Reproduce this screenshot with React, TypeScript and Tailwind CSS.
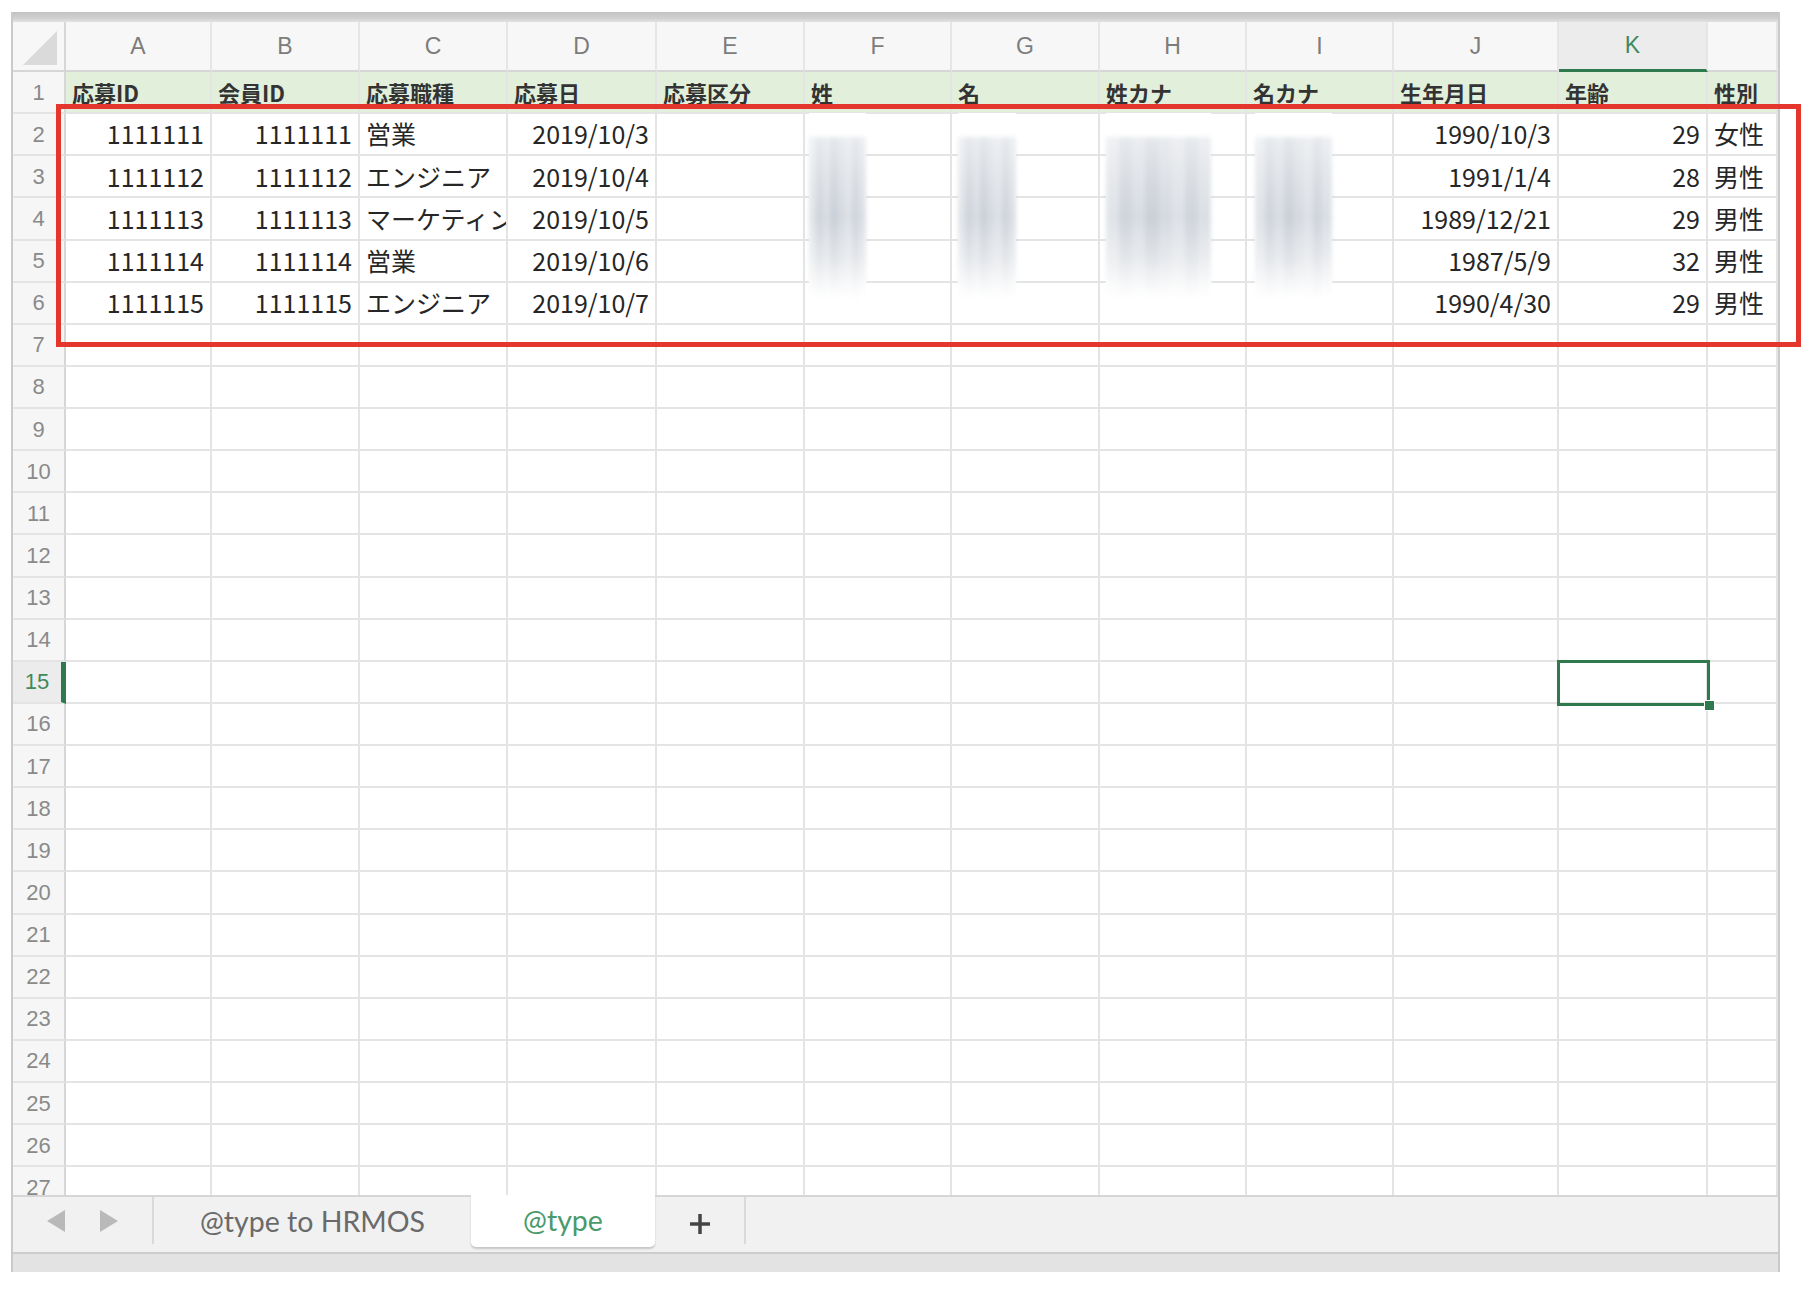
import React from 'react';

type Col = { key: string; w: string; right: boolean };

const COLS: Col[] = [
  { key: 'A', w: 'w-[146px]', right: true },
  { key: 'B', w: 'w-[148px]', right: true },
  { key: 'C', w: 'w-[148px]', right: false },
  { key: 'D', w: 'w-[149px]', right: true },
  { key: 'E', w: 'w-[148px]', right: false },
  { key: 'F', w: 'w-[147px]', right: false },
  { key: 'G', w: 'w-[148px]', right: false },
  { key: 'H', w: 'w-[147px]', right: false },
  { key: 'I', w: 'w-[147px]', right: false },
  { key: 'J', w: 'w-[165px]', right: true },
  { key: 'K', w: 'w-[149px]', right: true },
  { key: '', w: 'w-[70px]', right: false },
];

const HEAD = ['応募ID', '会員ID', '応募職種', '応募日', '応募区分', '姓', '名', '姓カナ', '名カナ', '生年月日', '年齢', '性別'];

const ROWS: string[][] = [
  ['1111111', '1111111', '営業', '2019/10/3', '', '', '', '', '', '1990/10/3', '29', '女性'],
  ['1111112', '1111112', 'エンジニア', '2019/10/4', '', '', '', '', '', '1991/1/4', '28', '男性'],
  ['1111113', '1111113', 'マーケティング', '2019/10/5', '', '', '', '', '', '1989/12/21', '29', '男性'],
  ['1111114', '1111114', '営業', '2019/10/6', '', '', '', '', '', '1987/5/9', '32', '男性'],
  ['1111115', '1111115', 'エンジニア', '2019/10/7', '', '', '', '', '', '1990/4/30', '29', '男性'],
];

const TOTAL_ROWS = 27;
const SELECTED_ROW = 15;

function ColumnHeader() {
  return (
    <div className="flex h-[50px] bg-[#f7f7f7] font-['Liberation_Sans',sans-serif] text-[23px] text-[#7c7c7c]">
      {/* corner with the select-all triangle */}
      <div className="w-[53px] flex items-end justify-end pr-[7px] pb-[5px] border-r-2 border-b-2 border-[#d6d6d6]">
        <svg width="34" height="34" viewBox="0 0 34 34">
          <polygon points="0,34 34,0 34,34" fill="#dadada" />
        </svg>
      </div>
      {COLS.map(c =>
        c.key === 'K' ? (
          <div key={c.key} className={`${c.w} flex items-center justify-center bg-[#ececec] border-r-2 border-[#e6e6e6] border-b-[3px] border-b-[#2e7a4e] text-[#3f8a5c]`}>
            {c.key}
          </div>
        ) : (
          <div key={c.key || 'L'} className={`${c.w} flex items-center justify-center border-r-2 border-[#e6e6e6] border-b-2 border-b-[#d6d6d6]`}>
            {c.key}
          </div>
        )
      )}
    </div>
  );
}

function Row({ n }: { n: number }) {
  const isHead = n === 1;
  const data = n >= 2 && n <= 6 ? ROWS[n - 2] : null;
  const selected = n === SELECTED_ROW;
  return (
    <div className="flex h-[42.13px] shrink-0">
      <div
        className={`w-[53px] flex items-center justify-center border-b-2 border-[#e4e4e4] font-['Liberation_Sans',sans-serif] text-[22px] ${
          selected
            ? 'bg-[#ececec] text-[#3f8a5c] border-r-[5px] border-r-[#2e7a4e]'
            : 'bg-[#f6f6f6] text-[#8a8a8a] border-r-2 border-r-[#d6d6d6]'
        }`}
      >
        {n}
      </div>
      {COLS.map((c, i) => {
        const text = isHead ? HEAD[i] : data ? data[i] : '';
        return (
          <div
            key={i}
            className={`${c.w} flex items-center overflow-hidden whitespace-nowrap px-[6px] border-r-2 border-b-2 border-[#e4e4e4] ${
              isHead ? 'bg-[#e2efda] font-bold text-[22px] text-[#333333]' : 'bg-white text-[25px] font-normal text-[#262626]'
            } ${c.right && !isHead ? 'justify-end' : 'justify-start'}`}
          >
            {text}
          </div>
        );
      })}
    </div>
  );
}

function Smudge({ box }: { box: string }) {
  // soft vertical streaks hiding the name columns
  const stripes = ['opacity-60', 'opacity-90', 'opacity-75', 'opacity-100', 'opacity-80', 'opacity-65', 'opacity-90', 'opacity-70'];
  return (
    <div className={`absolute bg-white ${box}`}>
      <div className="mt-[24px] h-[162px] flex blur-[2px]">
        {stripes.map((o, i) => (
          <div
            key={i}
            className={`flex-1 ${o} bg-[linear-gradient(to_bottom,#e5e8ec_0%,#d4d8de_30%,#cbd0d8_50%,#e1e4e8_75%,#f7f8f9_92%,#ffffff_100%)]`}
          />
        ))}
      </div>
    </div>
  );
}

function SheetTabs() {
  return (
    <div className="h-[57px] shrink-0 bg-[#f1f1f1] border-t-2 border-[#d6d6d6] flex items-start font-['Lato',sans-serif]">
      <div className="w-[141px] h-[47px] flex items-center pl-[34px] gap-[35px] border-r-2 border-[#d9d9d9]">
        <svg width="18" height="22" viewBox="0 0 18 22">
          <polygon points="18,0 0,11 18,22" fill="#b9b9b9" />
        </svg>
        <svg width="18" height="22" viewBox="0 0 18 22">
          <polygon points="0,0 18,11 0,22" fill="#b9b9b9" />
        </svg>
      </div>
      <div className="w-[317px] h-[55px] pb-[7px] flex items-center justify-center text-[28.5px] text-[#6a6a6a]">
        @type to HRMOS
      </div>
      <div className="w-[184px] h-[52px] -mt-[2px] pb-[2px] bg-white rounded-b-[5px] shadow-[0_2px_2px_rgba(0,0,0,0.18)] flex items-center justify-center text-[28.5px] text-[#4a9a6c]">
        @type
      </div>
      <div className="w-[89px] h-[53px] flex items-center justify-center">
        <svg width="22" height="22" viewBox="0 0 22 22">
          <path d="M11 1v20M1 11h20" stroke="#454545" strokeWidth="3.5" />
        </svg>
      </div>
      <div className="w-[2px] h-[47px] bg-[#d9d9d9]" />
    </div>
  );
}

export default function App() {
  const rows = Array.from({ length: TOTAL_ROWS }, (_, i) => i + 1);
  return (
    <div className="relative w-[1810px] h-[1296px] overflow-hidden bg-white pt-[12px] pl-[11px] font-['Noto_Sans_CJK_JP',sans-serif]">
      <div className="w-[1769px] flex flex-col border-x-2 border-[#cacaca]">
        <div className="h-[10px] bg-[linear-gradient(to_bottom,#c2c2c2,#cfcfcf_60%,#e2e2e2)]" />
        <ColumnHeader />
        <div className="h-[1123px] overflow-hidden flex flex-col">
          {rows.map(n => (
            <Row key={n} n={n} />
          ))}
        </div>
        <SheetTabs />
        <div className="h-[20px] bg-[#e3e3e3] border-t-2 border-[#cdcdcd]" />
      </div>

      <Smudge box="left-[809px] top-[113px] w-[57px] h-[187px]" />
      <Smudge box="left-[958px] top-[113px] w-[58px] h-[187px]" />
      <Smudge box="left-[1106px] top-[113px] w-[105px] h-[187px]" />
      <Smudge box="left-[1255px] top-[113px] w-[77px] h-[187px]" />

      {/* active cell K15 */}
      <div className="absolute left-[1557px] top-[660px] w-[153px] h-[46px] border-[3px] border-[#2e7a4e]" />
      <div className="absolute left-[1704px] top-[700px] w-[11px] h-[11px] bg-[#2e7a4e] border border-white" />

      {/* highlight box */}
      <div className="absolute left-[56px] top-[104px] w-[1745px] h-[243px] border-[5px] border-[#e4362c]" />
    </div>
  );
}
